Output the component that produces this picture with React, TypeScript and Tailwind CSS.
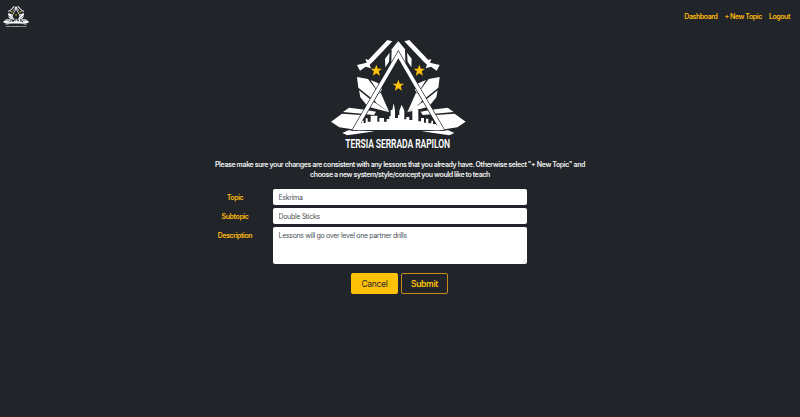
function Logo({ className }: { className: string }) {
  return (
    <svg className={className} viewBox="0 0 432 348" overflow="visible" aria-label="Tersia Serrada Rapilon">
      <defs>
        <g id="wing" fill="#fff">
          <path d="M199 16 L184 12 L127 72 L118 69 L122 80 L93 87 L102 104 L119 92 L135 97 L131 86 L140 78 Z" />
          <path d="M217 15 L197 40 L196 80 L218 46 Z" />
          <path d="M191 50 L177 68 L178 94 L189 77 Z" />
          <path d="M93 123 L126 129 L172 190 L160 206 L140 190 L97 155 Z" />
          <path d="M134 132 L157 142 L168 160 L160 174 Z" />
          <path d="M99 163 L140 196 L190 229 L126 212 L103 184 Z" />
          <path d="M148 184 L164 170 L190 229 L150 200 Z" />
          <path d="M15 257 L48 233 L116 238 L88 281 L40 274 Z" />
          <path d="M51 228 L69 215 L124 222 L116 234 Z" />
          <path d="M126 223 L150 227 L144 237 L118 235 Z" />
          <path d="M49 291 L67 283 L147 286 L64 298 Z" />
        </g>
        <path id="star" fill="#ffc107" d="M0 -18 L4.5 -6 L17 -5.6 L7.2 2 L10.8 15 L0 7.5 L-10.8 15 L-7.2 2 L-17 -5.6 L-4.5 -6 Z" />
      </defs>
      <use href="#wing" />
      <use href="#wing" transform="translate(434 0) scale(-1 1)" />
      <path
        fill="#fff"
        stroke="#212529"
        strokeWidth="4"
        paintOrder="stroke"
        d="M217 46 L79 282 H92 L217 67 L342 282 H355 Z"
      />
      <path
        fill="#fff"
        d="M86 282 L101 261 H107 V254 H113 V261 H119 V247 H125 V257 H134 V239 H154 V257 H160 V246 H174 V257 H182 V249 H190 V240 H194 V222 H199 L203 202 L207 222 V246 H216 V237 H220 V224 L227 206 L235 224 V250 H241 V243 H250 V252 H259 V216 H263 V207 H274 V222 H277 V256 H285 V246 H294 V260 H300 V248 H307 V262 H316 V254 H321 V264 H329 L348 282 Z"
      />
      <use href="#star" x="151" y="104" />
      <use href="#star" x="280" y="104" />
      <use href="#star" x="217" y="149" />
      <text x="58" y="336" textLength="314" lengthAdjust="spacingAndGlyphs" fill="#fff" fontFamily="Roboto, sans-serif" fontWeight="600" fontSize="36">
        TERSIA SERRADA RAPILON
      </text>
    </svg>
  );
}

export default function App() {
  return (
    <div className="flex h-[417px] w-[800px] flex-col overflow-hidden border-b border-[#30242a] bg-[#212529] font-['Inter',sans-serif] text-[7px] tracking-[-0.32px]">
      <header className="flex h-8 shrink-0 items-center justify-between pr-[10px] pl-[2px]">
        <Logo className="h-[23px] w-[28px]" />
        <nav className="flex gap-[7px] leading-none font-semibold tracking-[-0.42px] text-[#ffb90f]">
          <a>Dashboard</a>
          <a>+ New Topic</a>
          <a>Logout</a>
        </nav>
      </header>
      <main className="flex flex-col items-center">
        <Logo className="mt-1 mr-[4px] h-[116px] w-[144px]" />
        <p className="mt-2 text-center leading-[10px] font-semibold tracking-[-0.385px] text-[#f0f0f0]">
          Please make sure your changes are consistent with any lessons that you already have. Otherwise select "+ New Topic" and
          <br />
          choose a new system/style/concept you would like to teach
        </p>
        <form className="mt-[9px] ml-[197px] grid w-[330px] grid-cols-[76px_254px] gap-y-[3px] self-start text-[#495057]">
          <label className="flex h-4 items-center justify-center pt-[2px] font-semibold tracking-[-0.4px] text-[#ffb90f]">Topic</label>
          <input className="h-4 rounded-[2px] bg-white px-[5.5px]" defaultValue="Eskrima" />
          <label className="flex h-4 items-center justify-center pt-[2px] font-semibold tracking-[-0.4px] text-[#ffb90f]">Subtopic</label>
          <input className="h-4 rounded-[2px] bg-white px-[5.5px]" defaultValue="Double Sticks" />
          <label className="flex h-4 items-center justify-center pt-[2px] font-semibold tracking-[-0.42px] text-[#ffb90f]">Description</label>
          <div className="relative h-[37px] rounded-[2px] bg-white px-[5.5px] pt-1 leading-[10px]">
            Lessons will go over level one partner drills
            <svg className="absolute right-[1px] bottom-[1px] size-1" viewBox="0 0 4 4" stroke="#aaa" strokeWidth=".4">
              <path d="M0 4L4 0M2 4L4 2" />
            </svg>
          </div>
        </form>
        <div className="mt-[9px] mr-px flex gap-[3px] text-[8.5px] tracking-[-0.3px]">
          <button className="h-[21px] w-[47px] rounded-[2px] bg-[#ffc107] pt-px text-[#212529]">Cancel</button>
          <button className="h-[21px] w-[47px] rounded-[2px] border border-solid border-[#c98a16] pt-px font-semibold text-[#ffc107]">Submit</button>
        </div>
      </main>
    </div>
  );
}
